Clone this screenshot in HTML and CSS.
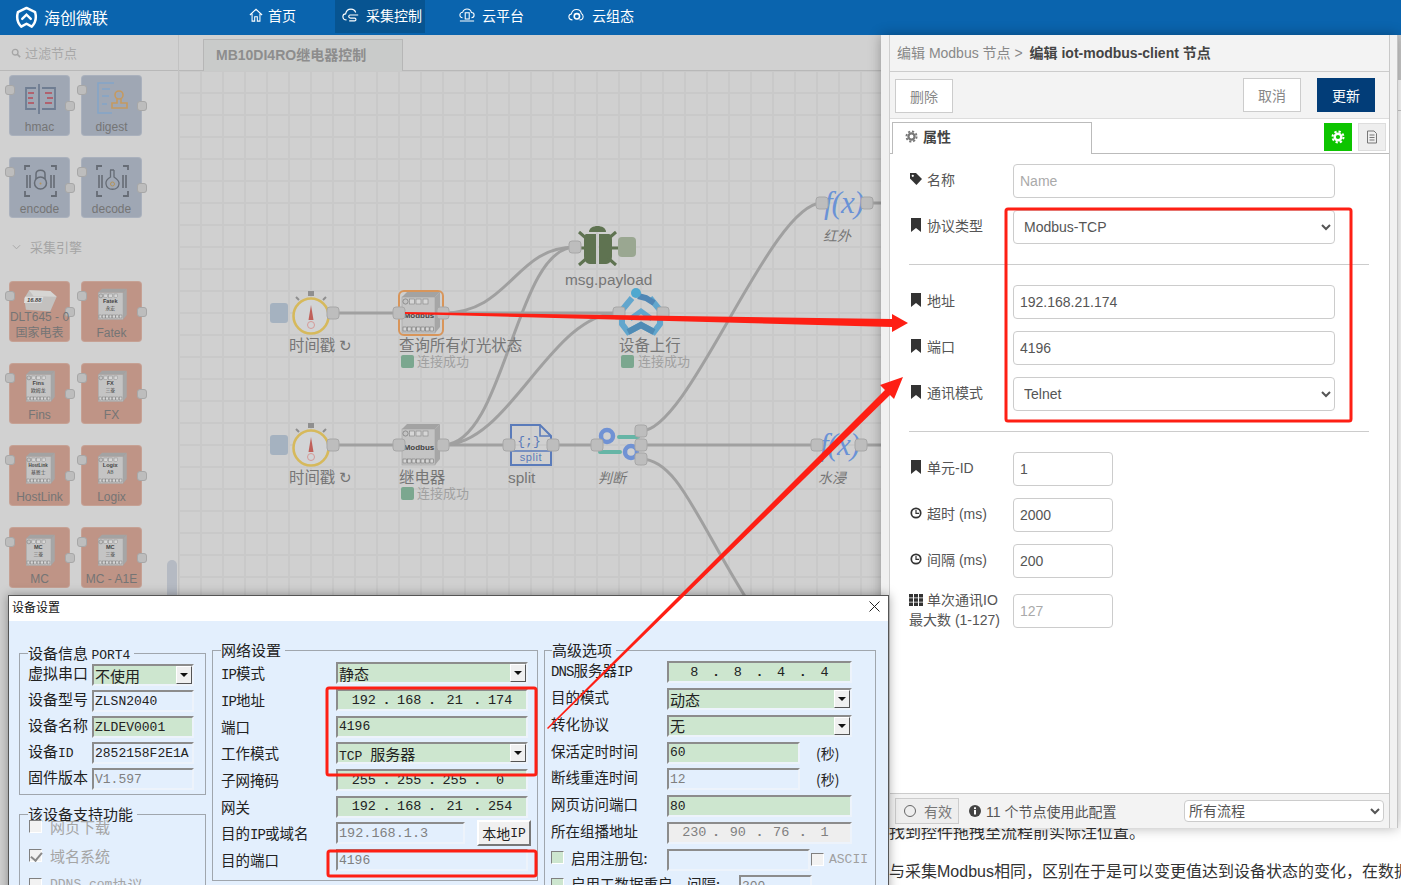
FILE: index.html
```html
<!DOCTYPE html>
<html lang="zh">
<head>
<meta charset="utf-8">
<title>海创微联</title>
<link rel="stylesheet" href="styles.css">
</head>
<body>
<svg class="defs" width="0" height="0" aria-hidden="true">
  <symbol id="plc" viewBox="0 0 44 44">
    <path d="M3 6 8 1H41L36 6Z" fill="#a3a3a3"/>
    <path d="M36 6 41 1V36L36 42Z" fill="#a6a6a6"/>
    <rect x="3" y="6" width="33" height="36" fill="#c4c4c4" stroke="#a3a3a3" stroke-width=".6"/>
    <circle cx="6.5" cy="10.5" r="2.6" fill="none" stroke="#777" stroke-width=".7"/>
    <g fill="#d6d6d6" stroke="#777" stroke-width=".5">
      <rect x="10.5" y="8" width="5" height="5"/><rect x="17" y="8" width="5" height="5"/><rect x="24" y="8" width="5" height="5"/>
    </g>
    <g fill="#d6d6d6" stroke="#666" stroke-width=".5">
      <rect x="4" y="36" width="3.6" height="4"/><rect x="8.5" y="36" width="3.6" height="4"/><rect x="13" y="36" width="3.6" height="4"/><rect x="17.5" y="36" width="3.6" height="4"/><rect x="22" y="36" width="3.6" height="4"/><rect x="26.5" y="36" width="3.6" height="4"/><rect x="31" y="36" width="3.6" height="4"/>
    </g>
  </symbol>
  <symbol id="bookmark" viewBox="0 0 12 14"><path d="M1 0H11V14L6 10 1 14Z" fill="#333"/></symbol>
  <symbol id="clock" viewBox="0 0 14 14"><circle cx="7" cy="7" r="5.500" fill="none" stroke="#333" stroke-width="2"/><path d="M7 3.500V7.400H10.500" fill="none" stroke="#333" stroke-width="1.400"/></symbol>
  <symbol id="gear" viewBox="0 0 14 14"><circle cx="7" cy="7" r="3.300" fill="none" stroke="currentColor" stroke-width="2.400"/><circle cx="7" cy="7" r="5.500" fill="none" stroke="currentColor" stroke-width="2" stroke-dasharray="2.300 2"/></symbol>
</svg>

<header class="topbar">
  <div class="brand">
    <svg class="logo" viewBox="0 0 24 24"><path d="M12 2 21 6.500C22.500 12 21 18 17.500 21.500L12 18.500 6.500 21.500C3 18 1.500 12 3 6.500Z" fill="none" stroke="#fff" stroke-width="2.600" stroke-linejoin="round"/><path d="M7.500 13.500 12 9 16.500 13.500" fill="none" stroke="#fff" stroke-width="2.400" stroke-linecap="round"/></svg>
    <span>海创微联</span>
  </div>
  <nav class="nav">
    <a class="nav-item nav-home"><svg viewBox="0 0 16 16"><path d="M1 8 8 1.500 15 8M3.500 6.500V15H6.500V10H9.500V15H12.500V6.500" fill="none" stroke="#fff" stroke-width="1.200"/></svg>首页</a>
    <a class="nav-item nav-active"><svg viewBox="0 0 20 16"><path d="M5 13.500C2.500 13.500 1 12 1 10 1 8 2.500 6.800 4 6.800 4.600 3.500 7 1.500 10 1.500 12.500 1.500 14.500 3 15.200 5.200M9 8H18M9 8C8 8 7.500 9 7.500 9.800 7.500 11 8.500 11.500 9.500 11.500H14C15 11.500 15.500 12.300 15.500 13 15.500 14 14.800 14.600 14 14.600H8" fill="none" stroke="#fff" stroke-width="1.300"/></svg>采集控制</a>
    <a class="nav-item nav-cloud"><svg viewBox="0 0 18 16"><path d="M4 11C2 11 1 9.500 1 8 1 6.200 2.500 5 4 5 4.800 2.800 6.800 1.200 9 1.200 11.500 1.200 13.500 3 14 5.200 15.800 5.300 17 6.500 17 8 17 9.700 15.800 11 14 11M1 14.800H17" fill="none" stroke="#fff" stroke-width="1.200"/><rect x="7" y="5.500" width="4.500" height="7" fill="none" stroke="#fff" stroke-width="1.200"/></svg>云平台</a>
    <a class="nav-item nav-group"><svg viewBox="0 0 18 16"><path d="M5 13.500C2.500 13.500 1 12 1 10 1 8.200 2.300 7 3.800 6.800 4.500 3.800 6.800 1.800 9.500 1.800 12.300 1.800 14.500 3.700 15 6.200 16.300 6.800 17 8.200 17 9.700 17 12 15.300 13.500 13 13.500" fill="none" stroke="#fff" stroke-width="1.200"/><circle cx="10" cy="9.500" r="3" fill="none" stroke="#fff" stroke-width="1.800"/></svg>云组态</a>
  </nav>
</header>

<main class="shell">
  <section class="editor">
    <aside class="sidebar">
      <div class="filter">
        <svg viewBox="0 0 12 12"><circle cx="5" cy="5" r="3.400" fill="none" stroke="#a5a5a5" stroke-width="1.600"/><path d="M7.500 7.500 11 11" stroke="#a5a5a5" stroke-width="2"/></svg>
        <span>过滤节点</span>
      </div>
      <div class="palette">
        <div class="pal pal-blue"><i class="port-l"></i><i class="port-r"></i>
          <svg class="pal-icon" viewBox="0 0 33 33"><path d="M15 2V32M12 6H2V27H12M18 6H31V27H18" fill="none" stroke="#6f7d92" stroke-width="1.800"/><path d="M4 11H10M4 16H9M4 21H10M21 11H28M23 16H29M21 21H28" stroke="#b0626e" stroke-width="1.800"/></svg>
          <span>hmac</span></div>
        <div class="pal pal-blue"><i class="port-l"></i><i class="port-r"></i>
          <svg class="pal-icon" viewBox="0 0 33 33"><path d="M18 1H2V31H16" fill="none" stroke="#84a5c7" stroke-width="1.500"/><path d="M6 7H14M6 14H13M6 22H11" stroke="#84a5c7" stroke-width="1.500"/><circle cx="23" cy="13" r="4" fill="none" stroke="#c59a60" stroke-width="1.600"/><path d="M21 17V21H16V26H31V21H25V17" fill="none" stroke="#c59a60" stroke-width="1.600"/></svg>
          <span>digest</span></div>
        <div class="pal pal-blue"><i class="port-l"></i><i class="port-r"></i>
          <svg class="pal-icon" viewBox="0 0 33 33"><path d="M1 6V2H6M27 2H32V6M1 27V32H6M27 32H32V27" fill="none" stroke="#666c75" stroke-width="1.800"/><path d="M3 11V24M6 11V24M27 11V24M30 11V24" stroke="#666c75" stroke-width="1.600"/><circle cx="16.500" cy="19" r="6" fill="none" stroke="#666c75" stroke-width="1.500"/><path d="M12 15V10C12 5 21 5 21 10V15" fill="none" stroke="#666c75" stroke-width="1.500"/><circle cx="16.500" cy="19.500" r="1" fill="#b5935a"/></svg>
          <span>encode</span></div>
        <div class="pal pal-blue"><i class="port-l"></i><i class="port-r"></i>
          <svg class="pal-icon" viewBox="0 0 33 33"><path d="M1 6V2H6M27 2H32V6M1 27V32H6M27 32H32V27" fill="none" stroke="#666c75" stroke-width="1.800"/><path d="M3 11V24M6 11V24M27 11V24M30 11V24" stroke="#666c75" stroke-width="1.600"/><path d="M14 6H18M14.500 6V13C11 15 9.500 17 10 20 11 27 22 27 23 20 23.500 17 21 15 18 13V6" fill="none" stroke="#666c75" stroke-width="1.300"/><circle cx="16.500" cy="20" r="2" fill="none" stroke="#b5935a"/></svg>
          <span>decode</span></div>
        <div class="pal-section">
          <svg viewBox="0 0 10 6"><path d="M1 1 5 5 9 1" fill="none" stroke="#a8a8a8" stroke-width="1.100"/></svg>
          <span>采集引擎</span>
        </div>
        <div class="pal pal-red pal-two"><i class="port-l"></i><i class="port-r"></i>
          <svg class="pal-icon pal-meter" viewBox="0 0 34 24"><path d="M.3 9.300 5.300 1 27 1.700 33.700 7.700 27 22.700 2 21Z" fill="#c3c1bf"/><path d="M5.300 1 27 1.700 33.700 7.700 10 7Z" fill="#d6d5d3"/><path d="M1 7.500H20L18 14H0Z" fill="#dcdcdc"/><text class="tiny-i" x="3" y="13">16.88</text></svg>
          <span>DLT645 - 0<br>国家电表</span></div>
        <div class="pal pal-red"><i class="port-l"></i><i class="port-r"></i>
          <svg class="pal-icon" viewBox="0 0 44 44"><use href="#plc"/><text class="chip" x="19" y="20">Fatek</text><text class="chip-c" x="19" y="29">永宏</text></svg><span>Fatek</span></div>
        <div class="pal pal-red"><i class="port-l"></i><i class="port-r"></i>
          <svg class="pal-icon" viewBox="0 0 44 44"><use href="#plc"/><text class="chip" x="19" y="20">Fins</text><text class="chip-c" x="19" y="29">欧姆龙</text></svg><span>Fins</span></div>
        <div class="pal pal-red"><i class="port-l"></i><i class="port-r"></i>
          <svg class="pal-icon" viewBox="0 0 44 44"><use href="#plc"/><text class="chip" x="19" y="20">FX</text><text class="chip-c" x="19" y="29">三菱</text></svg><span>FX</span></div>
        <div class="pal pal-red"><i class="port-l"></i><i class="port-r"></i>
          <svg class="pal-icon" viewBox="0 0 44 44"><use href="#plc"/><text class="chip chip-s" x="19" y="20">HostLink</text><text class="chip-c" x="19" y="29">基恩士</text></svg><span>HostLink</span></div>
        <div class="pal pal-red"><i class="port-l"></i><i class="port-r"></i>
          <svg class="pal-icon" viewBox="0 0 44 44"><use href="#plc"/><text class="chip" x="19" y="20">Logix</text><text class="chip-c" x="19" y="29">AB</text></svg><span>Logix</span></div>
        <div class="pal pal-red"><i class="port-l"></i><i class="port-r"></i>
          <svg class="pal-icon" viewBox="0 0 44 44"><use href="#plc"/><text class="chip" x="19" y="20">MC</text><text class="chip-c" x="19" y="29">三菱</text></svg><span>MC</span></div>
        <div class="pal pal-red"><i class="port-l"></i><i class="port-r"></i>
          <svg class="pal-icon" viewBox="0 0 44 44"><use href="#plc"/><text class="chip" x="19" y="20">MC</text><text class="chip-c" x="19" y="29">三菱</text></svg><span>MC - A1E</span></div>
      </div>
      <div class="pal-scroll"></div>
    </aside>

    <div class="workspace">
      <div class="tabs"><div class="tab">MB10DI4RO继电器控制</div></div>
      <div class="canvas">
        <svg class="flow" viewBox="179 71 702 814">
          <g class="wires">
            <path d="M333 313H399M443 313H619M443 313C510 313 515 247 575 247M333 445H399M443 445H509M553 445H597M641 445H817M861 445H881M867 203H881"/>
            <path d="M443 445C505 445 515 247 575 247M443 445C510 445 550 313 619 313"/>
            <path d="M641 431C690 431 770 203 822 203M641 459C680 459 700 530 760 620"/>
          </g>

          <!-- inject nodes -->
          <g>
            <rect class="ibtn" x="270" y="303" width="18" height="20" rx="3"/>
            <path class="stub" d="M296 297 299 300M326 297 323 300M309 292H313V295H309Z"/>
            <circle cx="311" cy="316" r="17.500" fill="#d2d4d6" stroke="#d6b95c" stroke-width="2.600"/>
            <path d="M311 305 313.500 320H308.500Z" fill="#c0605a"/>
            <circle cx="311" cy="325" r="3.500" fill="none" stroke="#d59a98"/>
            <rect class="ibtn" x="270" y="435" width="18" height="20" rx="3"/>
            <path class="stub" d="M296 429 299 432M326 429 323 432M309 424H313V427H309Z"/>
            <circle cx="311" cy="448" r="17.500" fill="#d2d4d6" stroke="#d6b95c" stroke-width="2.600"/>
            <path d="M311 437 313.500 452H308.500Z" fill="#c0605a"/>
            <circle cx="311" cy="457" r="3.500" fill="none" stroke="#d59a98"/>
          </g>
          <text class="lbl" x="289" y="351">时间戳 ↻</text>
          <text class="lbl" x="289" y="483">时间戳 ↻</text>

          <!-- modbus nodes -->
          <rect x="399" y="291" width="44" height="44" rx="5" fill="#cfcfcf" stroke="#d8955a" stroke-width="2"/>
          <use href="#plc" x="399" y="291" width="44" height="44"/>
          <text class="chip-b" x="419" y="318">Modbus</text>
          <text class="lbl" x="399" y="351">查询所有灯光状态</text>
          <rect class="ok" x="401" y="355" width="13" height="13" rx="2"/>
          <text class="stat" x="417" y="366">连接成功</text>

          <use href="#plc" x="399" y="423" width="44" height="44"/>
          <text class="chip-b" x="419" y="450">Modbus</text>
          <text class="lbl" x="399" y="483">继电器</text>
          <rect class="ok" x="401" y="487" width="13" height="13" rx="2"/>
          <text class="stat" x="417" y="498">连接成功</text>

          <!-- debug -->
          <g fill="#5f7351">
            <path d="M589 232C589 224 606 224 606 232Z"/>
            <path d="M586 234H596V264H590C586 264 584 260 584 256V240C584 236 585 234 586 234ZM599 234H609C611 234 612 236 612 240V256C612 260 610 264 606 264H599Z"/>
          </g>
          <path d="M579 232 587 239M616 232 608 239M579 265 587 258M616 265 608 258M570 248H585M611 248H618" stroke="#5f7351" stroke-width="3"/>
          <rect x="618" y="237" width="18" height="20" rx="4" fill="#9aa791"/>
          <text class="lbl" x="565" y="285">msg.payload</text>

          <!-- upload -->
          <path d="M632 298 622 310V324L628 332 641 325 654 332 660 324V310L650 298" fill="none" stroke="#62a6cd" stroke-width="6"/>
          <path d="M630 319 641 311 652 319" fill="none" stroke="#62a6cd" stroke-width="5"/>
          <path d="M638 296 646 298 654 303" fill="none" stroke="#4f86b5" stroke-width="6"/>
          <path d="M628 332 641 325 654 332" fill="none" stroke="#4f8bb5" stroke-width="6"/>
          <circle cx="636" cy="293" r="5" fill="#4fa8cf"/>
          <text class="lbl" x="619" y="351">设备上行</text>
          <rect class="ok" x="621" y="355" width="13" height="13" rx="2"/>
          <text class="stat" x="638" y="366">连接成功</text>

          <!-- split -->
          <path d="M511 425H540L551 436V465H511Z" fill="none" stroke="#5a7bba" stroke-width="2"/>
          <path d="M540 425V436H551M511 451H551" fill="none" stroke="#5a7bba" stroke-width="1.600"/>
          <text class="split-a" x="529" y="445">{;}</text>
          <text class="split-b" x="531" y="461">split</text>
          <text class="lbl" x="508" y="483">split</text>

          <!-- switch -->
          <circle cx="607" cy="436" r="6" fill="none" stroke="#7092d4" stroke-width="4.500"/>
          <circle cx="631" cy="452" r="6" fill="none" stroke="#7092d4" stroke-width="4.500"/>
          <path d="M619 437H638M600 452H620" stroke="#66b5a6" stroke-width="4" stroke-linecap="round"/>
          <text class="lbl lbl-i" x="598" y="483">判断</text>

          <!-- function -->
          <text class="fx" x="824" y="213">f(x)</text>
          <text class="lbl lbl-i" x="823" y="241">红外</text>
          <text class="fx" x="820" y="455">f(x)</text>
          <text class="lbl lbl-i" x="818" y="483">水浸</text>

          <!-- ports -->
          <g class="ports">
            <rect x="327" y="307" width="12" height="12" rx="3"/><rect x="393" y="307" width="12" height="12" rx="3"/><rect x="437" y="307" width="12" height="12" rx="3"/>
            <rect x="327" y="439" width="12" height="12" rx="3"/><rect x="393" y="439" width="12" height="12" rx="3"/><rect x="437" y="439" width="12" height="12" rx="3"/>
            <rect x="569" y="241" width="12" height="12" rx="3"/>
            <rect x="613" y="307" width="12" height="12" rx="3"/><rect x="657" y="307" width="12" height="12" rx="3"/>
            <rect x="503" y="439" width="12" height="12" rx="3"/><rect x="547" y="439" width="12" height="12" rx="3"/>
            <rect x="591" y="439" width="12" height="12" rx="3"/>
            <rect x="635" y="425" width="12" height="12" rx="3"/><rect x="635" y="439" width="12" height="12" rx="3"/><rect x="635" y="453" width="12" height="12" rx="3"/>
            <rect x="811" y="439" width="12" height="12" rx="3"/><rect x="855" y="439" width="12" height="12" rx="3"/>
            <rect x="816" y="197" width="12" height="12" rx="3"/><rect x="861" y="197" width="12" height="12" rx="3"/>
          </g>
        </svg>
      </div>
    </div>
  </section>

  <section class="article">
    <p>找到控件拖拽至流程前实际注位置。</p>
    <p>与采集Modbus相同，区别在于是可以变更值达到设备状态的变化，在数据</p>
  </section>
</main>

<div class="page-scroll"></div>

<aside class="tray">
  <div class="tray-panel">
    <div class="tray-head"><span>编辑 Modbus 节点 &gt; </span><b>编辑 iot-modbus-client 节点</b></div>
    <div class="tray-actions">
      <button class="btn btn-del">删除</button>
      <div class="tray-actions-r">
        <button class="btn">取消</button>
        <button class="btn btn-primary">更新</button>
      </div>
    </div>
    <div class="tray-tabs">
      <div class="tray-tab"><svg class="gear"><use href="#gear"/></svg>属性</div>
      <button class="tool tool-green"><svg class="gear-w"><use href="#gear"/></svg></button>
      <button class="tool"><svg viewBox="0 0 14 14"><path d="M2.500 1H9L11.500 3.500V13H2.500ZM4.500 5H9.500M4.500 7.500H9.500M4.500 10H9.500" fill="none" stroke="#777"/></svg></button>
    </div>
    <form class="form">
      <div class="frow"><label><svg class="tag" viewBox="0 0 13 13"><path d="M0 0H6.500L13 6.500 7 13 0 6Z" fill="#333"/><circle cx="3" cy="3" r="1.200" fill="#fff"/></svg>名称</label><input class="wide" placeholder="Name"></div>
      <div class="frow"><label><svg><use href="#bookmark"/></svg>协议类型</label><select class="wide"><option>Modbus-TCP</option></select></div>
      <div class="rule"></div>
      <div class="frow"><label><svg><use href="#bookmark"/></svg>地址</label><input class="wide" value="192.168.21.174"></div>
      <div class="frow"><label><svg><use href="#bookmark"/></svg>端口</label><input class="wide" value="4196"></div>
      <div class="frow"><label><svg><use href="#bookmark"/></svg>通讯模式</label><select class="wide"><option>Telnet</option></select></div>
      <div class="rule"></div>
      <div class="frow"><label><svg><use href="#bookmark"/></svg>单元-ID</label><input class="short" value="1"></div>
      <div class="frow"><label><svg><use href="#clock"/></svg>超时 (ms)</label><input class="short" value="2000"></div>
      <div class="frow"><label><svg><use href="#clock"/></svg>间隔 (ms)</label><input class="short" value="200"></div>
      <div class="frow frow-two"><label><span class="line"><svg viewBox="0 0 14 12"><path d="M0 0H4V3.500H0ZM5 0H9V3.500H5ZM10 0H14V3.500H10ZM0 4.300H4V7.700H0ZM5 4.300H9V7.700H5ZM10 4.300H14V7.700H10ZM0 8.500H4V12H0ZM5 8.500H9V12H5ZM10 8.500H14V12H10Z" fill="#333"/></svg>单次通讯IO</span><span class="line">最大数 (1-127)</span></label><input class="short" placeholder="127"></div>
    </form>
    <div class="tray-foot">
      <button class="valid"><i></i>有效</button>
      <svg class="info" viewBox="0 0 12 12"><circle cx="6" cy="6" r="6" fill="#444"/><rect x="5" y="5" width="2" height="4.500" fill="#fff"/><rect x="5" y="2.300" width="2" height="1.800" fill="#fff"/></svg>
      <span>11 个节点使用此配置</span>
      <select class="scope"><option>所有流程</option></select>
    </div>
  </div>
  <div class="tray-edge"></div>
</aside>

<div class="dialog">
  <div class="dlg-title"><span>设备设置</span><svg viewBox="0 0 11 11"><path d="M.5.500 10.500 10.500M10.500.500 .5 10.500" stroke="#222" stroke-width="1"/></svg></div>
  <div class="dlg-body">
    <div class="col col-1">
      <fieldset class="group g-info">
        <legend>设备信息 <span class="m">PORT4</span></legend>
        <div class="row"><span class="k">虚拟串口</span><span class="f f-on f-sel"><span class="c">不使用</span><i class="drop"></i></span></div>
        <div class="row"><span class="k">设备型号</span><span class="f">ZLSN2040</span></div>
        <div class="row"><span class="k">设备名称</span><span class="f f-on">ZLDEV0001</span></div>
        <div class="row"><span class="k">设备<span class="m">ID</span></span><span class="f">2852158F2E1A</span></div>
        <div class="row"><span class="k">固件版本</span><span class="f f-off">V1.597</span></div>
      </fieldset>
      <fieldset class="group g-func">
        <legend>该设备支持功能</legend>
        <div class="chk"><i class="box"></i>网页下载</div>
        <div class="chk"><i class="box box-on"></i>域名系统</div>
        <div class="chk"><i class="box"></i><span class="m">DDNS.com</span>协议</div>
      </fieldset>
    </div>

    <div class="col col-2">
      <fieldset class="group">
        <legend>网络设置</legend>
        <div class="row"><span class="k"><span class="m">IP</span>模式</span><span class="f f-on f-sel"><span class="c">静态</span><i class="drop"></i></span></div>
        <div class="row"><span class="k"><span class="m">IP</span>地址</span><span class="f f-on f-ip"><em>192</em><u>.</u><em>168</em><u>.</u><em>21</em><u>.</u><em>174</em></span></div>
        <div class="row"><span class="k">端口</span><span class="f f-on">4196</span></div>
        <div class="row"><span class="k">工作模式</span><span class="f f-on f-sel"><span><span>TCP </span><span class="c">服务器</span></span><i class="drop"></i></span></div>
        <div class="row"><span class="k">子网掩码</span><span class="f f-on f-ip"><em>255</em><u>.</u><em>255</em><u>.</u><em>255</em><u>.</u><em>0</em></span></div>
        <div class="row"><span class="k">网关</span><span class="f f-on f-ip"><em>192</em><u>.</u><em>168</em><u>.</u><em>21</em><u>.</u><em>254</em></span></div>
        <div class="row"><span class="k">目的<span class="m">IP</span>或域名</span><span class="f f-off f-dest">192.168.1.3</span><span class="wbtn">本地<span class="m">IP</span></span></div>
        <div class="row"><span class="k">目的端口</span><span class="f f-off">4196</span></div>
      </fieldset>
    </div>

    <div class="col col-3">
      <fieldset class="group">
        <legend>高级选项</legend>
        <div class="row"><span class="k"><span class="m">DNS</span>服务器<span class="m">IP</span></span><span class="f f-on f-ip"><em>8</em><u>.</u><em>8</em><u>.</u><em>4</em><u>.</u><em>4</em></span></div>
        <div class="row"><span class="k">目的模式</span><span class="f f-on f-sel"><span class="c">动态</span><i class="drop"></i></span></div>
        <div class="row"><span class="k">转化协议</span><span class="f f-on f-sel"><span class="c">无</span><i class="drop"></i></span></div>
        <div class="row"><span class="k">保活定时时间</span><span class="f f-on f-mid">60</span><span class="unit">(秒)</span></div>
        <div class="row"><span class="k">断线重连时间</span><span class="f f-off f-mid">12</span><span class="unit">(秒)</span></div>
        <div class="row"><span class="k">网页访问端口</span><span class="f f-on">80</span></div>
        <div class="row"><span class="k">所在组播地址</span><span class="f f-grey f-ip"><em>230</em><u>.</u><em>90</em><u>.</u><em>76</em><u>.</u><em>1</em></span></div>
        <div class="row"><span class="k k-chk"><i class="box box-green"></i>启用注册包:</span><span class="f f-off f-reg"></span><i class="box"></i><span class="m ascii">ASCII</span></div>
        <div class="row"><span class="k k-chk k-long"><i class="box box-green"></i>启用工数据重启，间隔:</span><span class="f f-off f-gap">300</span></div>
      </fieldset>
    </div>
  </div>
</div>

<svg class="marks" viewBox="0 0 1401 885">
  <rect x="1006" y="209" width="345" height="212" rx="2"/>
  <rect x="327" y="688" width="209" height="87" rx="2"/>
  <rect x="328" y="851" width="208" height="25" rx="2"/>
  <polygon points="405,312 892,319 892,314 908,323 892,332 892,327 405,314"/>
  <polygon points="547,728 885,390 880,385 903,377 894,399 890,395 548,729"/>
</svg>
</body>
</html>
```

FILE: styles.css
```css
* { box-sizing: border-box; }
html, body { margin: 0; height: 885px; overflow: hidden; }
body {
  position: relative;
  width: 1401px;
  background: #fff;
  font-family: "Liberation Sans", "Noto Sans CJK SC", sans-serif;
  font-size: 14px;
  color: #555;
}
.defs { position: absolute; }

/* top bar */
.topbar {
  height: 35px;
  background: #0a64ae;
  color: #fff;
  display: flex;
  align-items: flex-start;
}
.brand {
  width: 242px;
  height: 34px;
  padding-left: 15px;
  display: flex;
  align-items: center;
  gap: 6px;
  font-size: 16px;
}
.logo { width: 23px; height: 23px; }
.nav { display: flex; height: 33px; }
.nav-item {
  display: flex;
  align-items: center;
  height: 33px;
  gap: 5px;
  padding: 0 0 3px 7px;
  font-size: 14px;
  color: #fff;
  white-space: nowrap;
}
.nav-item svg { width: 16px; height: 16px; }
.nav-home { width: 93px; }
.nav-home svg { width: 14px; }
.nav-active { width: 90px; background: #075491; gap: 6px; }
.nav-active svg { width: 18px; }
.nav-cloud { margin-left: 27px; width: 109px; gap: 7px; }
.nav-group { width: 100px; gap: 8px; }

/* editor */
.shell { display: flex; height: 850px; }
.editor { width: 881px; display: flex; background: #d0d0d0; }
.sidebar {
  position: relative;
  width: 179px;
  background: #d1d1d1;
  border-right: 1px solid #c2c2c2;
  overflow: hidden;
}
.filter {
  height: 36px;
  display: flex;
  align-items: center;
  gap: 4px;
  padding-left: 11px;
  border-bottom: 1px solid #b8b8b8;
  color: #a8a8a8;
  font-size: 13px;
}
.filter svg { width: 10px; height: 10px; }
.palette {
  display: grid;
  grid-template-columns: 61px 61px;
  gap: 21px 11px;
  padding: 4px 0 0 9px;
}
.pal {
  position: relative;
  height: 61px;
  border-radius: 4px;
  border: 1px solid rgba(255,255,255,.12);
  text-align: center;
  color: #757575;
  font-size: 12px;
}
.pal-blue { background: #9fa7b4; }
.pal-red { background: #bf9486; }
.pal > span { position: absolute; left: -6px; right: -6px; bottom: 0; line-height: 16px; z-index: 2; }
.pal-icon { position: absolute; left: 14px; top: 6px; width: 33px; height: 33px; }
.pal-meter { top: 7px; height: 24px; }
.port-l, .port-r {
  position: absolute;
  width: 10px;
  height: 10px;
  border-radius: 3px;
  background: #bdbdbd;
  border: 1px solid #a7a7a7;
  z-index: 1;
}
.port-l { left: -5px; top: 9px; }
.port-r { right: -6px; top: 25px; }
.pal-section {
  grid-column: 1 / 3;
  height: 21px;
  padding: 0 0 6px 3px;
  display: flex;
  align-items: center;
  gap: 9px;
  color: #a5a5a5;
  font-size: 13px;
}
.pal-section svg { width: 9px; height: 6px; }
.chip { font: bold 7.500px "Liberation Sans", sans-serif; fill: #444; text-anchor: middle; }
.chip-s { font-size: 6px; }
.chip-c { font: 6.500px "Noto Sans CJK SC", sans-serif; fill: #444; text-anchor: middle; }
.chip-b { font: bold 8px "Liberation Sans", sans-serif; fill: #444; text-anchor: middle; }
.tiny-i { font: italic bold 6px "Liberation Sans", sans-serif; fill: #444; }
.pal-scroll {
  position: absolute;
  right: 1px;
  top: 525px;
  width: 10px;
  height: 80px;
  border-radius: 5px;
  background: #b5bac3;
}

.workspace { flex: 1; display: flex; flex-direction: column; min-width: 0; }
.tabs {
  height: 36px;
  padding: 4px 0 0 24px;
  border-bottom: 1px solid #b8b8b8;
  background: #d1d1d1;
}
.tab {
  width: 200px;
  height: 32px;
  padding-left: 12px;
  line-height: 30px;
  background: #c9cbca;
  border: 1px solid #b6b6b6;
  border-bottom: 0;
  color: #8d8d8d;
  font-weight: bold;
  font-size: 14px;
}
.canvas {
  position: relative;
  flex: 1;
  overflow: hidden;
  background-color: #d0d0d0;
  background-image:
    linear-gradient(#c9c9c9 2px, transparent 2px),
    linear-gradient(90deg, #c9c9c9 2px, transparent 2px);
  background-size: 22px 22px;
  background-position: 0 21px, 21px 0;
}
.flow { position: absolute; left: 0; top: 0; width: 702px; height: 814px; }
.wires path { fill: none; stroke: #a0a0a0; stroke-width: 3; }
.ports rect { fill: #bdbdbd; stroke: #a7a7a7; stroke-width: 1; }
.ibtn { fill: #a5b2c0; }
.stub { fill: #8f8f8f; stroke: #8f8f8f; stroke-width: 2; }
.ok { fill: #7ba78f; }
.lbl { font: 15.400px "Liberation Sans", "Noto Sans CJK SC", sans-serif; fill: #767676; }
.lbl-i { font-style: italic; font-size: 14px; }
.stat { font: 13px "Liberation Sans", "Noto Sans CJK SC", sans-serif; fill: #a0a0a0; }
.fx { font: italic 31px "Liberation Serif", serif; fill: #6a92d6; letter-spacing: -1px; }
.split-a { font: 13px "Liberation Mono", monospace; fill: #5a7bba; text-anchor: middle; }
.split-b { font: 11px "Liberation Sans", sans-serif; fill: #5a7bba; text-anchor: middle; letter-spacing: .6px; }

/* article behind the tray */
.article { flex: 1; min-width: 0; overflow: hidden; padding: 778px 0 0 8px; }
.article p {
  margin: 0;
  height: 39px;
  line-height: 39px;
  font-size: 16px;
  color: #333;
  white-space: nowrap;
}
.page-scroll {
  position: absolute;
  right: 0;
  top: 35px;
  width: 3px;
  height: 76px;
  border-top: 45px solid #cccccc;
  border-bottom: 1px solid #cccccc;
}

/* tray */
.tray {
  position: absolute;
  left: 881px;
  top: 35px;
  width: 517px;
  height: 793px;
  padding-left: 8px;
  background: #f1f1f1;
  border-right: 1px solid #c4c4c4;
  box-shadow: 0 0 12px rgba(0,0,0,.3);
  display: flex;
}
.tray-panel {
  width: 501px;
  height: 100%;
  display: flex;
  flex-direction: column;
  background: #fff;
  border-left: 1px solid #cfcfcf;
  border-right: 1px solid #c8c8c8;
}
.tray-edge { flex: 1; }
.tray-head {
  height: 37px;
  padding-left: 7px;
  line-height: 36px;
  background: #f3f3f3;
  border-bottom: 1px solid #ccc;
  color: #888;
  font-size: 14px;
}
.tray-head b { color: #444; margin-left: 3px; }
.tray-actions {
  height: 47px;
  padding: 7px 14px 0 5px;
  display: flex;
  justify-content: space-between;
  align-items: flex-start;
  background: #f3f3f3;
  border-bottom: 1px solid #ddd;
}
.tray-actions-r { display: flex; gap: 16px; margin-top: -1px; }
.btn {
  width: 58px;
  height: 34px;
  padding: 0;
  background: #fff;
  border: 1px solid #ccc;
  color: #888;
  font: 14px "Liberation Sans", "Noto Sans CJK SC", sans-serif;
}
.btn-primary { background: #023d78; border-color: #023d78; color: #fff; }
.tray-tabs {
  height: 35px;
  padding: 3px 3px 0 2px;
  display: flex;
  align-items: flex-start;
  gap: 6px;
  border-bottom: 1px solid #bbb;
  background: #fff;
}
.tray-tab {
  width: 200px;
  height: 32px;
  margin-right: auto;
  padding: 0 0 5px 12px;
  display: flex;
  align-items: center;
  gap: 5px;
  background: #fff;
  border: 1px solid #bbb;
  border-bottom: 0;
  font-weight: bold;
  color: #444;
}
.gear { width: 13px; height: 13px; color: #777; }
.tool {
  width: 28px;
  height: 28px;
  padding: 0;
  margin-top: 1px;
  display: flex;
  align-items: center;
  justify-content: center;
  background: #eee;
  border: 1px solid #ddd;
}
.tool svg { width: 14px; height: 14px; }
.tool-green { background: #0dc400; border-color: #0dc400; color: #fff; }
.gear-w { color: #fff; }

.form { flex: 1; padding: 10px 20px 0 19px; }
.frow { display: flex; align-items: center; height: 34px; margin-bottom: 12px; }
.frow label {
  width: 104px;
  padding-left: 1px;
  display: flex;
  align-items: center;
  color: #555;
  font-size: 14px;
  margin-top: -4px;
}
.frow label svg { width: 12px; height: 14px; margin-right: 5px; flex: none; }
.frow label .tag { height: 12px; }
.frow-two { margin-top: 16px; }
.frow-two label { flex-direction: column; align-items: flex-start; padding-left: 0; margin-top: -2px; }
.frow-two .line { display: flex; align-items: center; line-height: 20px; white-space: nowrap; }
.frow-two label svg { width: 14px; height: 12px; margin-right: 4px; }
.frow input, .frow select {
  height: 34px;
  border: 1px solid #ccc;
  border-radius: 4px;
  padding: 0 6px;
  background: #fff;
  color: #555;
  font: 14px "Liberation Sans", "Noto Sans CJK SC", sans-serif;
}
.frow select { padding-left: 6px; }
.frow input::placeholder { color: #aaa; }
.wide { width: 322px; }
.short { width: 100px; }
.rule { width: 460px; height: 1px; margin: 20px 0; background: #ccc; }
.tray-foot {
  height: 35px;
  display: flex;
  align-items: center;
  padding-left: 5px;
  background: #f3f3f3;
  border-top: 1px solid #ccc;
  color: #555;
}
.valid {
  width: 64px;
  height: 26px;
  padding: 0 0 0 8px;
  margin-right: 10px;
  display: flex;
  align-items: center;
  gap: 8px;
  background: #eee;
  border: 1px solid #ccc;
  color: #777;
  font: 14px "Liberation Sans", "Noto Sans CJK SC", sans-serif;
}
.valid i { width: 12px; height: 12px; border-radius: 50%; border: 1px solid #666; }
.info { width: 12px; height: 12px; margin-right: 5px; }
.scope {
  width: 200px;
  height: 22px;
  margin-left: auto;
  margin-right: 5px;
  border: 1px solid #ccc;
  border-radius: 4px;
  background: #fff;
  color: #555;
  font: 14px "Liberation Sans", "Noto Sans CJK SC", sans-serif;
}

/* device dialog */
.dialog {
  position: absolute;
  left: 8px;
  top: 595px;
  width: 881px;
  height: 300px;
  background: #e3effd;
  border: 1px solid #555;
  box-shadow: 0 0 10px rgba(0,0,0,.35);
  color: #222;
  font: 15px "Noto Sans CJK SC", sans-serif;
}
.dlg-title {
  height: 25px;
  background: #fff;
  padding: 0 8px 5px 3px;
  display: flex;
  align-items: center;
  justify-content: space-between;
  font-size: 12px;
  color: #111;
}
.dlg-title svg { width: 11px; height: 11px; }
.dlg-body { display: flex; padding: 20px 0 0 10px; align-items: flex-start; }
.col { display: flex; flex-direction: column; }
.col-1 { width: 187px; margin-right: 6px; padding-top: 3px; }
.col-2 { width: 326px; margin-right: 6px; }
.col-3 { width: 332px; }
.group {
  margin: 0;
  padding: 1px 9px 6px 8px;
  border: 1px solid #a0a6ad;
  min-width: 0;
}
.group legend {
  padding: 0 4px 0 0;
  height: 18px;
  line-height: 18px;
  font-size: 15px;
}
.col-1 .group { padding: 0 11px 2px 8px; }
.g-func { margin-top: 10px; }
.col-3 .group { padding: 0 6px 0; }
.col-3 legend { margin-left: 1px; }
.row { display: flex; align-items: center; height: 26.700px; white-space: nowrap; }
.col-1 .row { height: 26px; }
.col-3 .row { height: 26.750px; }
.k { width: 64px; flex: none; line-height: 20px; font-size: 15px; }
.col-1 .k, .col-3 .k { margin-top: -4px; }
.col-2 .k { width: 115px; font-size: 14.500px; }
.col-3 .k { width: 116px; font-size: 14.500px; }
.m { font: 13px "Liberation Mono", monospace; }
.col-2 .k .m, .col-3 .k .m { font-size: 14px; letter-spacing: -.9px; }
.f {
  flex: 1;
  height: 22px;
  padding: 0 1px;
  display: flex;
  align-items: center;
  overflow: hidden;
  border: 2px solid;
  border-color: #8c8c8c #edf3fb #edf3fb #8c8c8c;
  color: #222;
  font: 13px "Liberation Mono", monospace;
}
.col-3 .f { flex: none; width: 185px; }
.f-on { background: #cde6cf; }
.f-off { color: #808080; }
.f-grey { background: #eeeeee; color: #808080; }
.c { font: 15px "Noto Sans CJK SC", sans-serif; }
.f-sel { justify-content: space-between; padding-right: 0; }
.drop {
  position: relative;
  width: 16px;
  height: 18px;
  flex: none;
  background: #f0f0f0;
  border: 1px solid #a0a0a0;
  border-color: #fff #555 #555 #fff;
}
.drop::after {
  content: "";
  position: absolute;
  left: 3px;
  top: 6px;
  border: 4px solid transparent;
  border-top: 4px solid #111;
  border-bottom: 0;
}
.f-ip { justify-content: space-around; padding: 0 8px; font-size: 13.500px; }
.f-ip em { width: 34px; text-align: center; font-style: normal; }
.f-ip u { text-decoration: none; font-weight: bold; }
.f-dest { flex: none; width: 129px; font-size: 13.500px; }
.wbtn {
  flex: none;
  width: 54px;
  height: 26px;
  margin-left: 12px;
  margin-right: -3px;
  display: flex;
  align-items: center;
  justify-content: center;
  background: #f0f0f0;
  border: 2px solid;
  border-color: #fff #777 #777 #fff;
  font-size: 14px;
}
.col-3 .f-mid { width: 133px; }
.col-3 .f-reg { width: 143px; margin-right: 1px; }
.col-3 .f-gap { width: 73px; }
.col-3 .k-long { width: 188px; }
.unit { margin-left: 16px; font-size: 14px; }
.ascii { margin-left: -2px; color: #a0a0a0; }
.chk {
  display: flex;
  align-items: center;
  height: 29px;
  color: #a5a5a5;
  font-size: 15px;
}
.g-func .chk:first-of-type { margin-top: -11px; }
.box {
  position: relative;
  display: inline-block;
  width: 13px;
  height: 13px;
  flex: none;
  margin-right: 7px;
  background: #f2f2f2;
  border: 1px solid;
  border-color: #808080 #fff #fff #808080;
}
.chk .box { margin: 0 8px 0 1px; }
.box-on::after {
  content: "";
  position: absolute;
  left: 3px;
  top: 0;
  width: 5px;
  height: 9px;
  border: solid #888;
  border-width: 0 2px 2px 0;
  transform: rotate(40deg);
}
.box-green { background: #cde6cf; }
.k-chk { display: flex; align-items: center; }

/* red annotations */
.marks {
  position: absolute;
  left: 0;
  top: 0;
  width: 1401px;
  height: 885px;
  pointer-events: none;
}
.marks rect { fill: none; stroke: #fe1f14; stroke-width: 3; }
.marks polygon { fill: #fe1f14; }
```
